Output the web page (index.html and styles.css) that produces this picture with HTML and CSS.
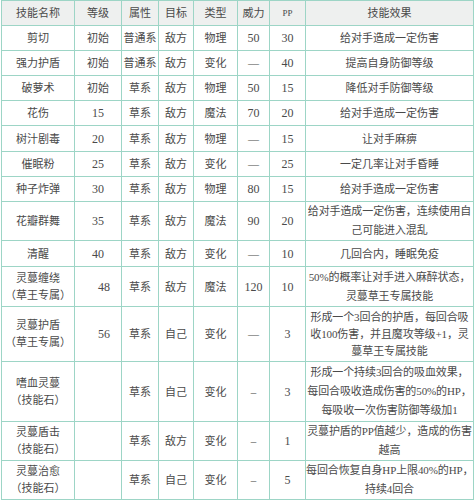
FILE: index.html
```html
<!DOCTYPE html>
<html lang="zh-CN">
<head>
<meta charset="utf-8">
<title>技能表</title>
<link rel="stylesheet" href="styles.css">
</head>
<body>
<table class="skills">
  <colgroup>
    <col class="c-name"><col class="c-lv"><col class="c-attr"><col class="c-tgt"><col class="c-type"><col class="c-pow"><col class="c-pp"><col class="c-eff">
  </colgroup>
  <thead>
    <tr class="r25">
      <th>技能名称</th><th>等级</th><th>属性</th><th>目标</th><th>类型</th><th>威力</th><th class="pp">PP</th><th>技能效果</th>
    </tr>
  </thead>
  <tbody>
    <tr class="r25"><td>剪切</td><td>初始</td><td>普通系</td><td>敌方</td><td>物理</td><td class="num">50</td><td class="num">30</td><td>给对手造成一定伤害</td></tr>
    <tr class="r25"><td>强力护盾</td><td>初始</td><td>普通系</td><td>敌方</td><td>变化</td><td>—</td><td class="num">40</td><td>提高自身防御等级</td></tr>
    <tr class="r25"><td>破萝术</td><td>初始</td><td>草系</td><td>敌方</td><td>物理</td><td class="num">50</td><td class="num">15</td><td>降低对手防御等级</td></tr>
    <tr class="r25"><td>花伤</td><td class="num">15</td><td>草系</td><td>敌方</td><td>魔法</td><td class="num">70</td><td class="num">20</td><td>给对手造成一定伤害</td></tr>
    <tr class="r26"><td>树汁剧毒</td><td class="num">20</td><td>草系</td><td>敌方</td><td>物理</td><td>—</td><td class="num">15</td><td>让对手麻痹</td></tr>
    <tr class="r25"><td>催眠粉</td><td class="num">25</td><td>草系</td><td>敌方</td><td>变化</td><td>—</td><td class="num">25</td><td>一定几率让对手昏睡</td></tr>
    <tr class="r25"><td>种子炸弹</td><td class="num">30</td><td>草系</td><td>敌方</td><td>物理</td><td class="num">80</td><td class="num">15</td><td>给对手造成一定伤害</td></tr>
    <tr class="r39"><td>花瓣群舞</td><td class="num">35</td><td>草系</td><td>敌方</td><td>魔法</td><td class="num">90</td><td class="num">20</td><td class="eff">给对手造成一定伤害，连续使用自<br>己可能进入混乱</td></tr>
    <tr class="r26"><td>清醒</td><td class="num">40</td><td>草系</td><td>敌方</td><td>变化</td><td>—</td><td class="num">10</td><td>几回合内，睡眠免疫</td></tr>
    <tr class="r40"><td class="two">灵蔓缠绕<br>（草王专属）</td><td class="num shift">48</td><td>草系</td><td>敌方</td><td>魔法</td><td class="num">120</td><td class="num">10</td><td class="eff">50%的概率让对手进入麻醉状态，<br>灵蔓草王专属技能</td></tr>
    <tr class="r55"><td class="two">灵蔓护盾<br>（草王专属）</td><td class="num shift">56</td><td>草系</td><td>自己</td><td>变化</td><td>—</td><td class="num">3</td><td class="eff three">形成一个3回合的护盾，每回合吸<br>收100伤害，并且魔攻等级+1，灵<br>蔓草王专属技能</td></tr>
    <tr class="r60"><td class="two">嗜血灵蔓<br>（技能石）</td><td></td><td>草系</td><td>自己</td><td>变化</td><td>–</td><td class="num">3</td><td class="eff">形成一个持续3回合的吸血效果，<br>每回合吸收造成伤害的50%的HP，<br>每吸收一次伤害防御等级加1</td></tr>
    <tr class="r38"><td class="two">灵蔓盾击<br>（技能石）</td><td></td><td>草系</td><td>敌方</td><td>变化</td><td>–</td><td class="num">1</td><td class="eff">灵蔓护盾的PP值越少，造成的伤害<br>越高</td></tr>
    <tr class="r38"><td class="two">灵蔓治愈<br>（技能石）</td><td></td><td>草系</td><td>自己</td><td>变化</td><td>–</td><td class="num">5</td><td class="eff">每回合恢复自身HP上限40%的HP，<br>持续4回合</td></tr>
  </tbody>
</table>
</body>
</html>
```

FILE: styles.css
```css
html, body {
  margin: 0;
  padding: 0;
  background: #ffffff;
}

body {
  padding-left: 1px;
  font-family: "Liberation Serif", "Noto Sans CJK SC", serif;
  font-size: 11px;
  color: #4a4a4a;
}

.skills {
  border-collapse: collapse;
  table-layout: fixed;
  width: 472px;
}

.c-name { width: 73px; }
.c-lv   { width: 47px; }
.c-attr { width: 37px; }
.c-tgt  { width: 35px; }
.c-type { width: 44px; }
.c-pow  { width: 32px; }
.c-pp   { width: 36px; }
.c-eff  { width: 168px; }

.skills th,
.skills td {
  border: 1px solid #9dd5c6;
  padding: 0;
  text-align: center;
  vertical-align: middle;
  line-height: 16px;
  font-weight: normal;
  white-space: nowrap;
  overflow: hidden;
}

.skills th {
  background: #eef0ef;
}

.skills .pp {
  font-size: 9px;
}

.skills .num {
  font-size: 12px;
}

.skills .shift {
  padding-left: 12px;
}

.skills .eff {
  line-height: 19px;
  overflow: visible;
  letter-spacing: -0.1px;
}

.skills .three {
  line-height: 17px;
}

.skills .two {
  line-height: 17px;
}

.r25 { height: 25px; }
.r26 { height: 26px; }
.r38 { height: 38px; }
.r39 { height: 39px; }
.r40 { height: 40px; }
.r55 { height: 55px; }
.r60 { height: 60px; }
```
